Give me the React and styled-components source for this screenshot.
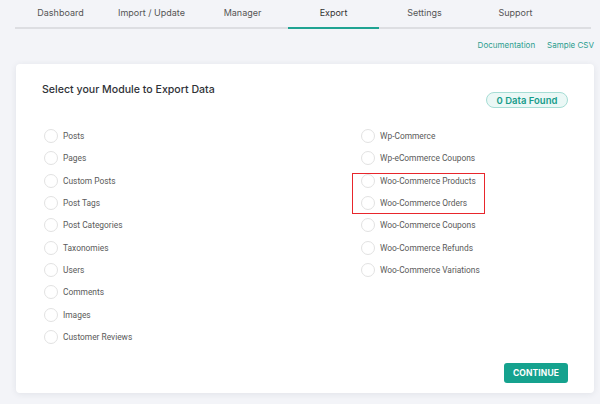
import React from "react";
import styled, { createGlobalStyle } from "styled-components";

const Global = createGlobalStyle`
  html, body { margin: 0; padding: 0; background: #f3f4f8; }
  body { font-family: Inter, "Noto Sans", sans-serif; }
  #root { width: 604px; height: 404px; overflow: hidden; }
`;

const Page = styled.div`
  width: 600px;
  height: 404px;
  background: #f3f4f8;
  display: flex;
  flex-direction: column;
  border-right: 4px solid #ffffff;
`;

const TabBar = styled.nav`
  display: flex;
  margin: 0 9px 0 15px;
  height: 27px;
  border-bottom: 2px solid #dddee2;
`;

const Tab = styled.div`
  width: 91px;
  display: flex;
  align-items: center;
  justify-content: center;
  font-family: Inter, sans-serif;
  font-size: 9px;
  color: ${(p) => (p.$active ? "#333" : "#555")};
  border-bottom: 2px solid ${(p) => (p.$active ? "#1fa392" : "transparent")};
  margin-bottom: -2px;
  padding-bottom: 2px;
`;

const LinksRow = styled.div`
  display: flex;
  justify-content: flex-end;
  align-items: center;
  gap: 12px;
  height: 32px;
  padding-right: 6px;
`;

const DocLink = styled.a`
  font-family: Inter, sans-serif;
  font-size: 8px;
  color: #2a9d8e;
  text-decoration: none;
`;

const Card = styled.section`
  margin: 3px 6px 0 16px;
  height: 329px;
  background: #fff;
  border-radius: 4px;
  box-shadow: 0 1px 6px rgba(40, 50, 80, 0.09);
  display: flex;
  flex-direction: column;
  box-sizing: border-box;
  padding: 0 26px 10px 26px;
`;

const Header = styled.div`
  display: flex;
  justify-content: space-between;
  align-items: flex-start;
`;

const Title = styled.h2`
  margin: 19px 0 0 0;
  font-family: Inter, sans-serif;
  font-weight: 500;
  font-size: 10.6px;
  color: #2f3237;
`;

const Badge = styled.div`
  margin-top: 28px;
  width: 82px;
  height: 16px;
  box-sizing: border-box;
  border: 1px solid #a6ddd5;
  background: #ebf8f6;
  border-radius: 9px;
  display: flex;
  align-items: center;
  justify-content: center;
  font-family: Inter, sans-serif;
  font-weight: 600;
  font-size: 9.5px;
  color: #179c8a;
`;

const Lists = styled.div`
  margin-top: 17px;
  display: grid;
  grid-template-columns: 317px 1fr;
  padding-left: 2px;
`;

const Column = styled.div`
  display: flex;
  flex-direction: column;
`;

const Row = styled.label`
  display: flex;
  align-items: center;
  height: 22.33px;
  gap: 5px;
  font-family: Roboto, sans-serif;
  font-size: 8.4px;
  color: #5a5a5a;
`;

const Radio = styled.span`
  width: 12px;
  height: 12px;
  border-radius: 50%;
  border: 1px solid #e2e2e2;
  background: #fff;
  flex: none;
`;

const Highlight = styled.div`
  position: relative;
  &::after {
    content: "";
    position: absolute;
    left: -9px;
    width: 131px;
    top: 3px;
    bottom: 0px;
    border: 1.3px solid #e8262c;
    pointer-events: none;
  }
`;

const Footer = styled.div`
  margin-top: auto;
  display: flex;
  justify-content: flex-end;
`;

const Button = styled.button`
  width: 64px;
  height: 20px;
  border: none;
  border-radius: 3px;
  background: #15a28e;
  color: #fff;
  font-family: Inter, sans-serif;
  font-weight: 700;
  font-size: 8.5px;
  letter-spacing: 0.1px;
  padding: 0;
`;

const left = [
  "Posts",
  "Pages",
  "Custom Posts",
  "Post Tags",
  "Post Categories",
  "Taxonomies",
  "Users",
  "Comments",
  "Images",
  "Customer Reviews",
];

const Item = ({ label }) => (
  <Row>
    <Radio />
    {label}
  </Row>
);

export default function App() {
  const tabs = ["Dashboard", "Import / Update", "Manager", "Export", "Settings", "Support"];
  return (
    <>
      <Global />
      <Page>
        <TabBar>
          {tabs.map((t) => (
            <Tab key={t} $active={t === "Export"}>
              {t}
            </Tab>
          ))}
        </TabBar>
        <LinksRow>
          <DocLink href="#">Documentation</DocLink>
          <DocLink href="#">Sample CSV</DocLink>
        </LinksRow>
        <Card>
          <Header>
            <Title>Select your Module to Export Data</Title>
            <Badge>0 Data Found</Badge>
          </Header>
          <Lists>
            <Column>
              {left.map((l) => (
                <Item key={l} label={l} />
              ))}
            </Column>
            <Column>
              <Item label="Wp-Commerce" />
              <Item label="Wp-eCommerce Coupons" />
              <Highlight>
                <Item label="Woo-Commerce Products" />
                <Item label="Woo-Commerce Orders" />
              </Highlight>
              <Item label="Woo-Commerce Coupons" />
              <Item label="Woo-Commerce Refunds" />
              <Item label="Woo-Commerce Variations" />
            </Column>
          </Lists>
          <Footer>
            <Button>CONTINUE</Button>
          </Footer>
        </Card>
      </Page>
    </>
  );
}
